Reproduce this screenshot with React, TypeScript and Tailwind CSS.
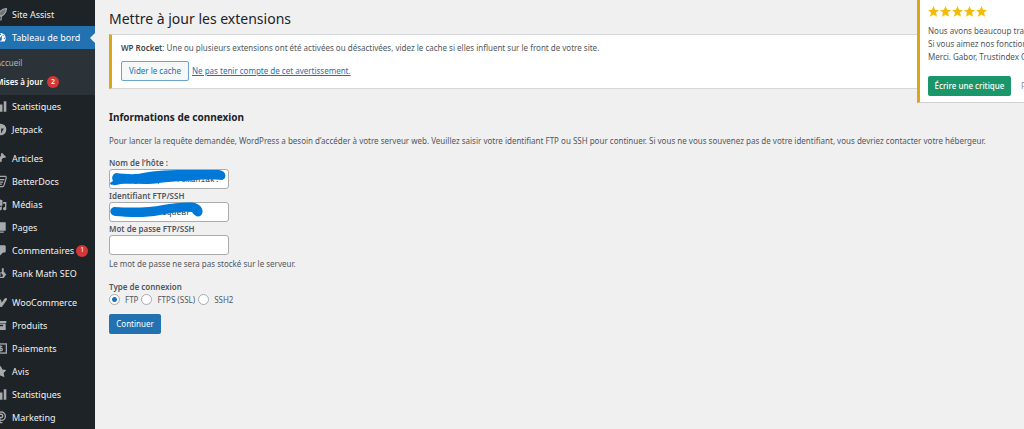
import type { ReactNode } from 'react';
import clsx from 'clsx';

interface MenuEntry {
  label: string;
  icon: ReactNode;
  badge?: number;
  active?: boolean;
}

const chartIcon = <path d="M19 18V2h-4v16h4zm-6 0V7H9v11h4zm-6 0v-8H3v8h4z" />;

const topMenu: MenuEntry[] = [
  {
    label: 'Site Assist',
    icon: (
      <g fill="none" stroke="currentColor" strokeWidth="1.8">
        <path d="M19 1c-5 0-9 2-12 8l4 4c5-3 8-7 8-12z" fill="currentColor" fillOpacity="0.6" />
        <path d="M7 9H3l-1 4 4-1M11 13v5l-4 1 1-4" />
      </g>
    ),
  },
  {
    label: 'Tableau de bord',
    active: true,
    icon: (
      <path d="M3.76 16h12.48c1.1-1.37 1.76-3.11 1.76-5 0-4.42-3.58-8-8-8s-8 3.58-8 8c0 1.89.66 3.63 1.76 5zM10 4c.55 0 1 .45 1 1s-.45 1-1 1-1-.45-1-1 .45-1 1-1zM6 6c.55 0 1 .45 1 1s-.45 1-1 1-1-.45-1-1 .45-1 1-1zm8 0c.55 0 1 .45 1 1s-.45 1-1 1-1-.45-1-1 .45-1 1-1zm-5.37 5.55L12 7v6c0 1.1-.9 2-2 2s-2-.9-2-2c0-.57.24-1.08.63-1.45zM4 10c.55 0 1 .45 1 1s-.45 1-1 1-1-.45-1-1 .45-1 1-1zm12 0c.55 0 1 .45 1 1s-.45 1-1 1-1-.45-1-1 .45-1 1-1z" />
    ),
  },
];

const statsMenu: MenuEntry[] = [
  { label: 'Statistiques', icon: chartIcon },
  {
    label: 'Jetpack',
    icon: (
      <path fillRule="evenodd" d="M10 1a9 9 0 1 0 0 18 9 9 0 0 0 0-18zM9 11.5H5L9 3.5v8zm2 5v-8h4l-4 8z" />
    ),
  },
];

const contentMenu: MenuEntry[] = [
  {
    label: 'Articles',
    icon: (
      <path d="M10.44 3.02l1.82-1.82 6.36 6.35-1.83 1.82c-1.05-.68-2.48-.57-3.41.36l-.75.75c-.92.93-1.04 2.35-.35 3.41l-1.83 1.82-2.41-2.41-2.8 2.79c-.42.42-3.38 2.71-3.8 2.29s1.86-3.39 2.28-3.81l2.79-2.79L4.1 9.36l1.83-1.82c1.05.69 2.48.57 3.4-.36l.75-.75c.93-.92 1.05-2.35.36-3.41z" />
    ),
  },
  {
    label: 'BetterDocs',
    icon: (
      <g fill="none" stroke="currentColor" strokeWidth="1.8" strokeLinejoin="round">
        <path d="M7 2h11l1 2-4 13-2 1H3L1 15 5 4z" />
        <path d="M9 7h7M7 11h7M6 14h6" />
      </g>
    ),
  },
  {
    label: 'Médias',
    icon: (
      <path d="M13 11V4c0-.55-.45-1-1-1h-1.67L9 1H5L3.67 3H2c-.55 0-1 .45-1 1v7c0 .55.45 1 1 1h10c.55 0 1-.45 1-1zM7 4.5c1.38 0 2.5 1.12 2.5 2.5S8.38 9.5 7 9.5 4.5 8.38 4.5 7 5.62 4.5 7 4.5zM14 6h5v10.5c0 1.38-1.12 2.5-2.5 2.5S14 17.88 14 16.5s1.12-2.5 2.5-2.5c.17 0 .34.02.5.05V9h-3V6zm-4 8.05V13h2v3.5c0 1.38-1.12 2.5-2.5 2.5S7 17.88 7 16.5 8.12 14 9.5 14c.17 0 .34.02.5.05z" />
    ),
  },
  { label: 'Pages', icon: <path d="M6 15V2h12v13H6zm-1 1h10v2H3V5h2v11z" /> },
  {
    label: 'Commentaires',
    badge: 1,
    icon: (
      <path d="M5 2h11c1.1 0 2 .9 2 2v7c0 1.1-.9 2-2 2h-2l-5 5v-5H5c-1.1 0-2-.9-2-2V4c0-1.1.9-2 2-2z" />
    ),
  },
  {
    label: 'Rank Math SEO',
    icon: (
      <path d="M2 11h3v3H2zM7 8h3v6H7zM12 2h3v6h2l-3 5-4-5h2zM16 9l3 2-4 6H5l-3-2h11z" />
    ),
  },
];

const shopMenu: MenuEntry[] = [
  {
    label: 'WooCommerce',
    icon: (
      <path
        d="M2 5l3 9 4-7 2 8 7-10"
        fill="none"
        stroke="currentColor"
        strokeWidth="4"
        strokeLinejoin="round"
        strokeLinecap="round"
      />
    ),
  },
  { label: 'Produits', icon: <path d="M19 3v3H1V3h18zM2 7h16v10H2V7zm12 4V9H6v2h8z" /> },
  {
    label: 'Paiements',
    icon: (
      <g fill="none" stroke="currentColor" strokeWidth="2">
        <rect x="1" y="3" width="18" height="14" />
        <path d="M13 7H9v3h4v3H8" strokeWidth="1.5" />
        <path d="M10.5 5v10" strokeWidth="1.5" />
      </g>
    ),
  },
  { label: 'Avis', icon: <path d="m10 1 3 6 6 .75-4.12 4.62L16 19l-6-3-6 3 1.13-6.63L1 7.75 7 7z" /> },
  { label: 'Statistiques', icon: chartIcon },
  {
    label: 'Marketing',
    icon: (
      <g fill="none" stroke="currentColor" strokeWidth="2">
        <circle cx="11" cy="8" r="6.5" />
        <path d="M8 9V5h3a2.5 2.5 0 0 1 0 5H9v8M6 18h7" />
      </g>
    ),
  },
];

function Badge({ count }: { count: number }) {
  return (
    <span className="flex h-3 w-3 items-center justify-center rounded-full bg-[#d63638] text-[7px] text-white">
      {count}
    </span>
  );
}

function MenuItem({ label, icon, badge, active }: MenuEntry) {
  return (
    <li>
      <a
        href="#"
        className={clsx(
          'relative flex h-[23px] items-center whitespace-nowrap text-[9px]',
          active ? 'bg-[#2271b1] text-white' : 'text-[#f0f0f1]',
        )}
      >
        <span className={clsx('flex w-6 shrink-0 justify-center', !active && 'text-[#a7aaad]')}>
          <svg viewBox="0 0 20 20" fill="currentColor" className="h-[13px] w-[13px]" aria-hidden>
            {icon}
          </svg>
        </span>
        <span className="mr-0.5">{label}</span>
        {badge !== undefined && <Badge count={badge} />}
        {active && (
          <span className="absolute right-0 border-y-[5px] border-r-[5px] border-y-transparent border-r-[#f0f0f1]" />
        )}
      </a>
    </li>
  );
}

function MenuGroup({ items }: { items: MenuEntry[] }) {
  return (
    <ul>
      {items.map((item) => (
        <MenuItem key={item.label} {...item} />
      ))}
    </ul>
  );
}

function Sidebar() {
  return (
    <aside className="w-[95px] shrink-0 overflow-hidden bg-[#1d2327]">
      <nav className="-ml-3 pt-[3px]">
        <MenuGroup items={topMenu} />
        <ul className="flex flex-col gap-px bg-[#2c3338] pt-[5px] pb-1 pl-2 text-[8px] leading-[18px]">
          <li>
            <a href="#" className="text-[#b4b7ba]">Accueil</a>
          </li>
          <li>
            <a href="#" className="flex items-center gap-1 font-semibold whitespace-nowrap text-white">
              Mises à jour <Badge count={2} />
            </a>
          </li>
        </ul>
        <MenuGroup items={statsMenu} />
        <div className="mt-1.5">
          <MenuGroup items={contentMenu} />
        </div>
        <div className="mt-1.5">
          <MenuGroup items={shopMenu} />
        </div>
      </nav>
    </aside>
  );
}

function Field({
  id,
  label,
  type = 'text',
  value,
  children,
}: {
  id: string;
  label: string;
  type?: string;
  value?: string;
  children?: ReactNode;
}) {
  return (
    <div>
      <label htmlFor={id} className="block leading-[13px] font-semibold">
        {label}
      </label>
      <div className="relative h-5 w-[120px]">
        <input
          id={id}
          type={type}
          defaultValue={value}
          className="block h-5 w-full rounded-[3px] border border-[#a9abae] bg-white px-1 font-['Liberation_Mono',monospace] text-[8px] text-[#2c3338]"
        />
        {children}
      </div>
    </div>
  );
}

function Scribble({ d }: { d: string }) {
  return (
    <svg
      viewBox="0 0 120 20"
      className="pointer-events-none absolute inset-0 h-5 w-[120px] overflow-visible"
      fill="#0078d7"
      aria-hidden
    >
      <path d={d} />
    </svg>
  );
}

function Radio({ label, checked }: { label: string; checked?: boolean }) {
  return (
    <label className="flex items-center gap-[5px]">
      <input
        type="radio"
        name="connection_type"
        defaultChecked={checked}
        className="h-[11px] w-[11px] appearance-none rounded-full border border-[#a9abae] bg-white bg-[radial-gradient(circle,#2271b1_0_2px,transparent_3px)] not-checked:bg-none"
      />
      {label}
    </label>
  );
}

function ReviewCard() {
  return (
    <section className="absolute top-0 right-0 h-[103px] w-[107px] overflow-hidden border-b border-l-[3px] border-b-[#d0d1d3] border-l-[#dba617] bg-white pt-1.5 pl-2 whitespace-nowrap">
      <div className="flex gap-px text-[#f6bb06]" aria-hidden>
        {[1, 2, 3, 4, 5].map((n) => (
          <svg key={n} viewBox="0 0 20 20" fill="currentColor" className="h-[11px] w-[11px] shrink-0">
            <path d="m10 0 3 7 7 .5-5.5 4.5 2 7.5-6.5-4-6.5 4 2-7.5L0 7.5 7 7z" />
          </svg>
        ))}
      </div>
      <p className="mt-[7px] leading-[13px]">
        Nous avons beaucoup travaillé
        <br />
        Si vous aimez nos fonctionnalités
        <br />
        Merci. Gabor, Trustindex CEO
      </p>
      <div className="mt-[13px] flex items-center gap-2.5">
        <button type="button" className="h-5 w-[83px] shrink-0 rounded-[2px] bg-[#1a976a] font-medium text-white">
          Écrire une critique
        </button>
        <a href="#" className="text-[#8c8f94]">Plus tard</a>
      </div>
    </section>
  );
}

export default function App() {
  return (
    <div className="relative flex min-h-screen overflow-hidden bg-[#f0f0f1] font-['Noto_Sans',sans-serif] text-[8px] text-[#50575e]">
      <Sidebar />
      <main className="min-w-0 flex-1 pl-3.5">
        <h1 className="pt-2 text-[14px] leading-[22px] text-[#1d2327]">Mettre à jour les extensions</h1>

        <div className="mt-1 h-[55px] border-y border-l-[3px] border-y-[#d6d7d9] border-l-[#dba617] bg-white pt-1.5 pl-[9px]">
          <p className="leading-[14px]">
            <strong className="font-semibold text-[#3c434a]">WP Rocket</strong>: Une ou plusieurs extensions ont été
            activées ou désactivées, videz le cache si elles influent sur le front de votre site.
          </p>
          <div className="mt-1.5 flex items-center gap-[3px] text-[#2271b1]">
            <button type="button" className="h-5 w-[68px] rounded-[2px] border border-[#6ba3d0] bg-[#f6f7f7]">
              Vider le cache
            </button>
            <a href="#" className="underline">Ne pas tenir compte de cet avertissement.</a>
          </div>
        </div>

        <form onSubmit={(e) => e.preventDefault()}>
          <h2 className="mt-5 text-[10px] leading-4 font-bold text-[#1d2327]">Informations de connexion</h2>
          <p className="mt-[9px] leading-[14px]">
            Pour lancer la requête demandée, WordPress a besoin d’accéder à votre serveur web. Veuillez saisir votre
            identifiant FTP ou SSH pour continuer. Si vous ne vous souvenez pas de votre identifiant, vous devriez
            contacter votre hébergeur.
          </p>

          <div className="mt-2 flex flex-col">
            <Field id="hostname" label="Nom de l’hôte :" value="    g    p   romaniak.">
              <Scribble d="M7 4C16 5 26 6 34 4C50 0 84 1 110 1C118 2 118 10 113 11C98 9 86 11 76 12C66 12 58 13 50 14C38 16 24 14 11 15C8 16 4 17 1 15C1 13 3 13 4 12C2 8 4 5 7 4z" />
            </Field>
            <Field id="username" label="Identifiant FTP/SSH" value="    g     iqueBr">
              <Scribble d="M5 5C22 6 40 6 54 3C66 1 77 0 86 1C92 3 95 8 93 12C91 16 86 15 83 10C75 9 61 11 51 13C36 16 19 15 6 14C0 13 0 6 5 5z" />
            </Field>
            <Field id="password" label="Mot de passe FTP/SSH" type="password" />
          </div>
          <p className="mt-0.5 leading-[13px]">Le mot de passe ne sera pas stocké sur le serveur.</p>

          <fieldset className="mt-2.5">
            <legend className="leading-[13px] font-semibold">Type de connexion</legend>
            <div className="flex gap-[3px] leading-[13px]">
              <Radio label="FTP" checked />
              <Radio label="FTPS (SSL)" />
              <Radio label="SSH2" />
            </div>
          </fieldset>

          <button type="submit" className="mt-2 h-5 w-[52px] rounded-[2px] bg-[#2271b1] text-white">
            Continuer
          </button>
        </form>
      </main>
      <ReviewCard />
    </div>
  );
}
